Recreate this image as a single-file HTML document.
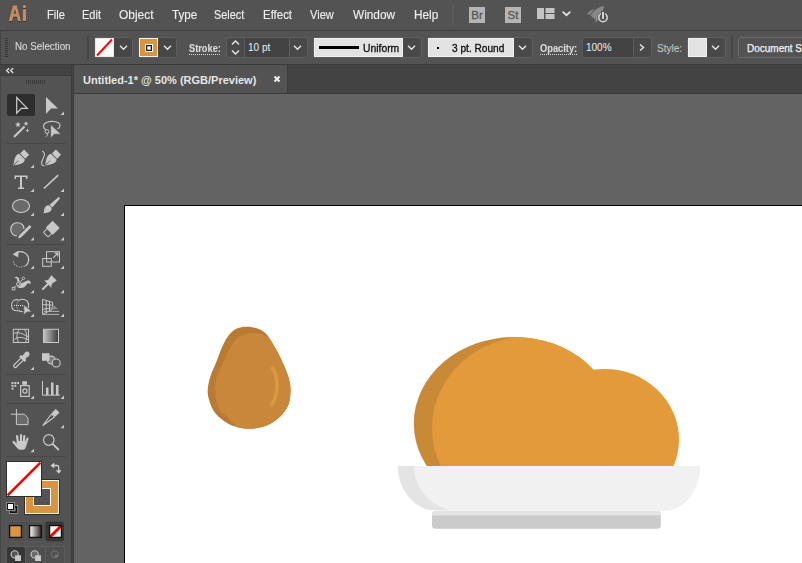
<!DOCTYPE html>
<html><head><meta charset="utf-8">
<style>
*{margin:0;padding:0;box-sizing:border-box}
html,body{width:802px;height:563px;overflow:hidden;background:#535353;font-family:"Liberation Sans",sans-serif}
.a{position:absolute}
#menubar{left:0;top:0;width:802px;height:30px;background:#535353}
#menusep{left:0;top:30px;width:802px;height:1px;background:#3d3d3d}
#ctrl{left:0;top:31px;width:802px;height:33px;background:#535353;border-left:1px solid #434343}
#ctrlsep{left:0;top:64px;width:802px;height:1px;background:#3a3a3a}
.mi{position:absolute;top:7px;font-size:13px;color:#ededed;-webkit-text-stroke:0.15px #ededed;white-space:nowrap;line-height:16px;transform-origin:0 0;transform:scaleX(0.87)}
.ct{position:absolute;font-size:10px;color:#d8d8d8;-webkit-text-stroke:0.12px #d8d8d8;white-space:nowrap;line-height:12px;transform-origin:0 0}
.dl{position:absolute;height:1px;background:repeating-linear-gradient(90deg,#d8d8d8 0 1px,transparent 1px 2px)}
#tabbar{left:74px;top:65px;width:728px;height:28px;background:#434343}
#tab{left:74px;top:65px;width:214px;height:28px;background:#535353;border-right:1px solid #3c3c3c}
#tabline{left:74px;top:93px;width:728px;height:1px;background:#3a3a3a}
#paste{left:74px;top:94px;width:728px;height:469px;background:#636363}
#artboard{left:124px;top:205px;width:700px;height:400px;background:#fff;border-left:1px solid #000;border-top:1px solid #000}
#panel{left:0;top:65px;width:71px;height:498px;background:#535353;border-left:1px solid #474747}
#panelhead{left:0;top:65px;width:71px;height:11px;background:#434343;border-bottom:1px solid #3a3a3a}
#ps1{left:71px;top:65px;width:1px;height:498px;background:#3b3b3b}
#ps2{left:72px;top:65px;width:1px;height:498px;background:#454545}
#ps3{left:73px;top:65px;width:1px;height:498px;background:#3b3b3b}
.box{position:absolute;top:37px;height:21px;border:1px solid #5e5e5e;border-radius:3px;background:#494949;overflow:hidden}
.lt{position:absolute;top:0;height:19px;background:#e4e4e4}
.dk{position:absolute;top:0;height:19px;background:#434343}
.vt{position:absolute;top:0;width:1px;height:19px;background:#5e5e5e}
.bt{position:absolute;font-size:10px;white-space:nowrap;line-height:12px;transform-origin:0 0}
</style></head><body>
<div class="a" id="menubar"></div>
<div class="a" id="menusep"></div>
<div class="a" id="ctrl"></div>
<div class="a" id="ctrlsep"></div>
<div class="a" id="tabbar"></div>
<div class="a" id="tab"></div>
<div class="a" id="tabline"></div>
<div class="a" id="paste"></div>
<div class="a" id="artboard"></div>
<div class="a" id="panel"></div>
<div class="a" id="panelhead"></div>
<div class="a" id="ps1"></div><div class="a" id="ps2"></div><div class="a" id="ps3"></div>

<!-- menu -->
<svg class="a" style="left:0;top:0" width="40" height="30" viewBox="0 0 40 30">
  <defs><filter id="sh" x="-20%" y="-20%" width="140%" height="140%"><feGaussianBlur stdDeviation="0.6"/></filter></defs>
  <g fill="#2f2f2f" filter="url(#sh)" transform="translate(0,0.8)">
    <path d="M8.8,21 L12.9,5.4 H16.8 L20.9,21 H17.9 L17,16.8 H13.2 L12.2,21 Z M14.8,9.3 L13.5,13.8 H16.3 Z" fill-rule="evenodd"/>
    <rect x="22.8" y="9.3" width="3.2" height="11.7"/><circle cx="24.4" cy="6.6" r="1.7"/>
  </g>
  <g fill="#c98a5e">
    <path d="M8.8,21 L12.9,5.4 H16.8 L20.9,21 H17.9 L17,16.8 H13.2 L12.2,21 Z M14.8,9.3 L13.5,13.8 H16.3 Z" fill-rule="evenodd"/>
    <rect x="22.8" y="9.3" width="3.2" height="11.7"/><circle cx="24.4" cy="6.6" r="1.7"/>
  </g>
</svg>
<div class="mi" style="left:47px;transform:scaleX(0.857)">File</div>
<div class="mi" style="left:82px;transform:scaleX(0.85)">Edit</div>
<div class="mi" style="left:119px;transform:scaleX(0.92)">Object</div>
<div class="mi" style="left:172px;transform:scaleX(0.89)">Type</div>
<div class="mi" style="left:214px;transform:scaleX(0.84)">Select</div>
<div class="mi" style="left:263px;transform:scaleX(0.88)">Effect</div>
<div class="mi" style="left:310px;transform:scaleX(0.85)">View</div>
<div class="mi" style="left:353px;transform:scaleX(0.91)">Window</div>
<div class="mi" style="left:414px;transform:scaleX(0.91)">Help</div>
<div class="a" style="left:452px;top:5px;width:2px;height:20px;background:#5b5b5b;border-radius:1px"></div>
<div class="a" style="left:469px;top:7px;width:16px;height:16px;background:#b5b5b5;color:#555555;font-size:11.5px;line-height:17px;text-align:center;-webkit-text-stroke:0.3px #555555">Br</div>
<div class="a" style="left:505px;top:7px;width:16px;height:16px;background:#b5b5b5;color:#555555;font-size:11.5px;line-height:17px;text-align:center;-webkit-text-stroke:0.3px #555555">St</div>
<svg class="a" style="left:530px;top:0" width="90" height="30" viewBox="530 0 90 30">
  <rect x="537" y="8" width="7" height="11" fill="#c4c4c4"/>
  <rect x="545.5" y="8" width="9" height="5" fill="#c4c4c4"/>
  <rect x="545.5" y="14" width="9" height="5" fill="#c4c4c4"/>
  <path d="M562.6,11.6 L566.5,15.2 L570.4,11.6" fill="none" stroke="#e0e0e0" stroke-width="1.8"/>
  <path d="M604,6 C599,6.5 594,10 590.5,15.5 L594.5,19 C600,15.5 603.5,11 604,6 Z" fill="#868686"/>
  <path d="M587,14.6 C588.5,11.5 591,9.5 594.8,9 C593,10.5 591.5,12.5 590.3,14.6 Z" fill="#868686"/>
  <path d="M596,16 L599,18 C598,20 597,21.5 595.5,22.8 C595.2,20.5 595.3,18 596,16 Z" fill="#868686"/>
  <circle cx="603" cy="17.5" r="5.4" fill="#535353"/>
  <circle cx="603" cy="17.5" r="4.2" fill="none" stroke="#d2d2d2" stroke-width="1.6"/>
  <rect x="601" y="11" width="4" height="8.5" fill="#535353"/>
  <rect x="602" y="12" width="2" height="6.8" fill="#d2d2d2"/>
</svg>

<!-- control bar -->
<svg class="a" style="left:0;top:31px" width="90" height="33" viewBox="0 31 90 33">
  <g fill="#373737">
    <rect x="5" y="38" width="3" height="1"/><rect x="5" y="40" width="3" height="1"/><rect x="5" y="42" width="3" height="1"/><rect x="5" y="44" width="3" height="1"/><rect x="5" y="46" width="3" height="1"/><rect x="5" y="48" width="3" height="1"/><rect x="5" y="50" width="3" height="1"/><rect x="5" y="52" width="3" height="1"/><rect x="5" y="54" width="3" height="1"/><rect x="5" y="56" width="3" height="1"/>
  </g>
  <rect x="87" y="35" width="2" height="24.5" fill="#474747"/>
</svg>
<div class="ct" style="left:15px;top:41px;transform:scaleX(0.98)">No Selection</div>

<!-- stroke swatch + dropdown -->
<div class="box" style="left:94px;width:39px"><div class="dk" style="left:19px;width:19px;background:#474747"></div></div>
<svg class="a" style="left:95px;top:38px" width="19" height="19" viewBox="0 0 19 19">
  <rect x="0" y="0" width="19" height="19" fill="#fff" stroke="#d0d0d0" stroke-width="1"/>
  <path d="M2,17.5 L17,1.5" stroke="#f00" stroke-width="2"/>
</svg>
<div class="box" style="left:138px;width:39px"><div class="dk" style="left:19px;width:19px;background:#474747"></div></div>
<svg class="a" style="left:139px;top:38px" width="19" height="19" viewBox="0 0 19 19">
  <rect x="0.5" y="0.5" width="18" height="18" fill="#d99440" stroke="#f2f2f2" stroke-width="1"/>
  <rect x="6" y="6" width="8" height="8" fill="#fff"/>
  <rect x="7" y="7" width="6" height="6" fill="#1a1a1a"/>
  <rect x="8.3" y="8.3" width="3.4" height="3.4" fill="#fff"/>
</svg>

<div class="dl" style="left:189px;top:54px;width:31px"></div><div class="ct" style="left:189px;top:43px;font-weight:bold;transform:scaleX(0.925)">Stroke:</div>
<!-- spinner -->
<div class="box" style="left:226px;width:82px"><div class="vt" style="left:17px"></div><div class="dk" style="left:18px;width:44px"></div><div class="vt" style="left:62px"></div></div>
<div class="bt" style="left:248px;top:42px;color:#f0f0f0">10 pt</div>
<!-- uniform -->
<div class="box" style="left:313px;width:109px"></div><div class="a" style="left:314px;top:38px;width:89px;height:19px;background:#e3e3e3;border:1px solid #f0f0f0"></div>
<div class="a" style="left:319px;top:46px;width:40px;height:3px;background:#000"></div>
<div class="bt" style="left:363px;top:42px;color:#141414;font-size:11px;transform:scaleX(0.94);-webkit-text-stroke:0.35px #141414">Uniform</div>
<!-- 3pt round -->
<div class="box" style="left:427px;width:106px"></div><div class="a" style="left:428px;top:38px;width:86px;height:19px;background:#e3e3e3;border:1px solid #f0f0f0"></div>
<div class="a" style="left:436.5px;top:46.5px;width:2px;height:2px;background:#000"></div>
<div class="bt" style="left:452px;top:42px;color:#141414;font-size:11px;transform:scaleX(0.92);-webkit-text-stroke:0.35px #141414">3 pt. Round</div>
<div class="dl" style="left:540px;top:54px;width:37px"></div><div class="ct" style="left:540px;top:43px;font-weight:bold;transform:scaleX(0.93)">Opacity:</div>
<!-- opacity -->
<div class="box" style="left:582px;width:70px"><div class="dk" style="left:0;width:50px"></div><div class="vt" style="left:50px"></div></div>
<div class="bt" style="left:586px;top:42px;color:#f0f0f0">100%</div>
<div class="ct" style="left:657px;top:43px;color:#bdbdbd">Style:</div>
<div class="box" style="left:687px;width:39px"></div><div class="a" style="left:688px;top:38px;width:19px;height:19px;background:#e3e3e3;border:1px solid #f0f0f0"></div>
<div class="a" style="left:731px;top:35px;width:2px;height:24px;background:#474747"></div>
<div class="a" style="left:738px;top:37px;width:80px;height:21px;border:1px solid #6a6a6a;border-radius:3px;background:#535353"></div>
<div class="ct" style="left:747px;top:43px;color:#f2f2f2;-webkit-text-stroke:0.25px #f2f2f2">Document Setup</div>

<svg class="a" style="left:0;top:31px" width="802" height="33" viewBox="0 31 802 33">
  <g fill="none" stroke="#e8e8e8" stroke-width="1.4">
    <path d="M120,45.8 L123.5,49.2 L127,45.8"/>
    <path d="M164,45.8 L167.5,49.2 L171,45.8"/>
    <path d="M232,44.5 L235.5,41 L239,44.5"/>
    <path d="M232,50.5 L235.5,54 L239,50.5"/>
    <path d="M294,45.8 L297.5,49.2 L301,45.8"/>
    <path d="M408,45.8 L411.5,49.2 L415,45.8"/>
    <path d="M519,45.8 L522.5,49.2 L526,45.8"/>
    <path d="M640,44.5 L643.5,47.5 L640,50.5"/>
    <path d="M712,45.8 L715.5,49.2 L719,45.8"/>
  </g>
</svg>
<!-- tab -->
<div class="a" style="left:83px;top:74px;font-size:11px;font-weight:bold;color:#e6e6e6;white-space:nowrap;line-height:13px">Untitled-1* @ 50% (RGB/Preview)</div>
<svg class="a" style="left:270px;top:72px" width="14" height="14" viewBox="270 72 14 14">
  <path d="M274.5,76.5 L279.5,81.5 M279.5,76.5 L274.5,81.5" stroke="#f2f2f2" stroke-width="2"/>
</svg>

<!-- toolbar icons -->
<svg class="a" style="left:0;top:65px" width="71" height="498" viewBox="0 65 71 498">
  <path d="M9.2,68.3 L6.6,70.6 L9.2,72.9 M13.2,68.3 L10.6,70.6 L13.2,72.9" fill="none" stroke="#e6e6e6" stroke-width="1.3"/>
  <g fill="#3a3a3a"><rect x="26" y="80" width="1" height="4"/><rect x="28" y="80" width="1" height="4"/><rect x="30" y="80" width="1" height="4"/><rect x="32" y="80" width="1" height="4"/><rect x="34" y="80" width="1" height="4"/><rect x="36" y="80" width="1" height="4"/><rect x="38" y="80" width="1" height="4"/><rect x="40" y="80" width="1" height="4"/><rect x="42" y="80" width="1" height="4"/><rect x="44" y="80" width="1" height="4"/></g>
  <rect x="7" y="94" width="28" height="22" rx="2" fill="#2e2e2e"/>
  <g fill="#484848">
    <rect x="6" y="143" width="60" height="1"/><rect x="6" y="244" width="60" height="1"/><rect x="6" y="321" width="60" height="1"/><rect x="6" y="374" width="60" height="1"/><rect x="6" y="403" width="60" height="1"/><rect x="6" y="456" width="60" height="1"/>
  </g>
  <g fill="#c8c8c8">
    <!-- corner triangles -->
    <path d="M64,111.5 V115 H60.5 Z"/>
    <path d="M34,164.5 V168 H30.5 Z"/>
    <path d="M34,188.5 V192 H30.5 Z"/><path d="M64,188.5 V192 H60.5 Z"/>
    <path d="M34,212.5 V216 H30.5 Z"/><path d="M64,212.5 V216 H60.5 Z"/>
    <path d="M34,237 V240.5 H30.5 Z"/><path d="M64,237 V240.5 H60.5 Z"/>
    <path d="M34,265.5 V269 H30.5 Z"/><path d="M64,265.5 V269 H60.5 Z"/>
    <path d="M34,289.7 V293.2 H30.5 Z"/><path d="M64,289.7 V293.2 H60.5 Z"/>
    <path d="M34,313.6 V317.1 H30.5 Z"/><path d="M64,313.6 V317.1 H60.5 Z"/>
    <path d="M34,366.5 V370 H30.5 Z"/>
    <path d="M34,395.5 V399 H30.5 Z"/><path d="M64,395.5 V399 H60.5 Z"/>
    <path d="M64,424.7 V428.2 H60.5 Z"/>
    <path d="M34,448.7 V452.2 H30.5 Z"/>
  </g>
  <!-- selection -->
  <path d="M16.7,97.5 V113.2 L21.3,108.3 H27.3 Z" fill="none" stroke="#cfcfcf" stroke-width="1.2"/>
  <path d="M46,97 V114 L51,108.5 H58 Z" fill="#c8c8c8"/>
  <!-- magic wand -->
  <path d="M14,137 L24.5,126.5" stroke="#c8c8c8" stroke-width="2.2"/>
  <path d="M18,121.5 L18.8,123.6 L21,123.8 L19.2,125.1 L19.8,127.3 L18,126 L16.2,127.3 L16.8,125.1 L15,123.8 L17.2,123.6 Z" fill="#c8c8c8"/>
  <path d="M26,121 L26.7,122.7 L28.5,123 L27,124 L27.5,125.8 L26,124.7 L24.5,125.8 L25,124 L23.5,123 L25.3,122.7 Z" fill="#c8c8c8"/>
  <path d="M27.5,128.5 L28.1,130 L29.5,130.3 L28.2,131 L27.5,132.5 L26.8,131 L25.5,130.3 L26.9,130 Z" fill="#c8c8c8"/>
  <!-- lasso -->
  <path d="M46,130 C43.2,128.5 42.6,125.5 44.8,123.5 C47.5,121 54.5,120.6 58.3,122.8 C60.8,124.3 60.6,127.4 57.5,129" fill="none" stroke="#c8c8c8" stroke-width="1.1"/>
  <circle cx="47" cy="131.6" r="1.9" fill="none" stroke="#c8c8c8" stroke-width="1"/>
  <path d="M47.6,133.4 C47.8,135 47,136.3 45.6,136.8" fill="none" stroke="#c8c8c8" stroke-width="1"/>
  <path d="M50.6,124.4 V138.2 L54.4,134.2 H61.2 Z" fill="#c8c8c8" stroke="#535353" stroke-width="0.8"/>
  <!-- pen -->
  <g transform="translate(13.2,165.6) rotate(45)">
    <path d="M0,0 C-1.6,-3 -4.6,-6 -4.9,-9 C-5.1,-11 -4.3,-12.2 -3.6,-12.6 H3.6 C4.3,-12.2 5.1,-11 4.9,-9 C4.6,-6 1.6,-3 0,0 Z" fill="#c8c8c8"/>
    <rect x="-3.6" y="-19" width="7.2" height="5.6" fill="#c8c8c8"/>
    <path d="M0,-0.8 V-7" stroke="#535353" stroke-width="0.9"/>
  </g>
  <!-- curvature pen -->
  <g transform="translate(45,165.6) rotate(45)">
    <path d="M0,0 C-1.6,-3 -4.6,-6 -4.9,-9 C-5.1,-11 -4.3,-12.2 -3.6,-12.6 H3.6 C4.3,-12.2 5.1,-11 4.9,-9 C4.6,-6 1.6,-3 0,0 Z" fill="#c8c8c8"/>
    <rect x="-3.6" y="-19" width="7.2" height="5.6" fill="#c8c8c8"/>
    <path d="M0,-0.8 V-7" stroke="#535353" stroke-width="0.9"/>
  </g>
  <path d="M42,151.2 C44,151.8 45.2,153.5 44,156.5 C42.8,159.3 41.2,161.5 41.6,163.8 C41.9,165.3 43,165.9 44.3,165.7" fill="none" stroke="#c8c8c8" stroke-width="1.1"/>
  <!-- type -->
  <path d="M14.5,175.5 H27.5 V179 H26 V177 H22 V187.5 H24 V189 H18 V187.5 H20 V177 H16 V179 H14.5 Z" fill="#c8c8c8"/>
  <!-- line -->
  <path d="M43.9,188.5 L58.2,175.2" stroke="#c8c8c8" stroke-width="1.7"/>
  <!-- ellipse -->
  <ellipse cx="21" cy="206" rx="8.5" ry="6.5" fill="#6a6a6a" stroke="#cfcfcf" stroke-width="1.1"/>
  <!-- brush -->
  <g transform="translate(43.4,213.6) rotate(45)">
    <path d="M0,0 C-0.8,-2 -3.4,-4 -3.4,-6.6 A3.4,3.4 0 0 1 3.4,-6.6 C3.4,-4 0.8,-2 0,0 Z" fill="#c8c8c8"/>
    <path d="M-1.9,-10.6 L-1.1,-21.8 A1.1,1.1 0 0 1 1.1,-21.8 L1.9,-10.6 Z" fill="#c8c8c8"/>
  </g>
  <!-- shaper -->
  <path d="M24,229 C24,225 21,222.8 17,222.8 C13,222.8 10.8,226 10.8,229.5 C10.8,233 13.5,236 17,236" fill="#6a6a6a" stroke="#cfcfcf" stroke-width="1.1"/>
  <path d="M29.5,225 L31.5,227 L21,237.5 L18,238.5 L19,235.5 Z" fill="#c8c8c8"/>
  <!-- eraser -->
  <g transform="translate(50.9,229.6) rotate(-45)">
    <rect x="-2.2" y="-5" width="9.6" height="10" fill="#c8c8c8"/>
    <rect x="-7.2" y="-3.3" width="5.4" height="6.6" rx="0.6" fill="none" stroke="#c8c8c8" stroke-width="1"/>
  </g>
  <!-- rotate -->
  <path d="M17.5,252.4 C19,251.6 21,251.5 23,252 C27,253.2 29,257 28.6,260.5 C28.3,263 27,265 25.5,266" fill="none" stroke="#c8c8c8" stroke-width="1.3"/>
  <path d="M12.6,254.2 L18.3,250.8 V257.4 Z" fill="#c8c8c8"/>
  <path d="M13.3,261.5 L14.6,264.2 L16.8,266 L19.6,267 L22.4,266.9 L25,266" fill="none" stroke="#c8c8c8" stroke-width="1.1" stroke-dasharray="1.1,1.5"/>
  <!-- scale -->
  <rect x="46.5" y="251.7" width="13" height="10.3" fill="none" stroke="#c8c8c8" stroke-width="1"/>
  <rect x="42.7" y="258.5" width="8.6" height="7.8" fill="none" stroke="#c8c8c8" stroke-width="1"/>
  <path d="M53.2,257.8 L57.6,253.4 M54.6,253.1 H57.9 V256.4" fill="none" stroke="#c8c8c8" stroke-width="1.1"/>
  <!-- puppet warp -->
  <path d="M14.2,277.8 C15.5,276.2 17.5,276.4 18.6,278 C19.6,279.5 19.4,281.5 20.5,282.6 C21.8,283.6 23.5,282.8 25.2,281.6 C26.8,280.5 28.5,280.2 29.8,281 C31,282 30.8,283.5 30.2,284.6 C29.6,283.4 28.6,283 27.6,283.6 C26.5,284.5 25.8,286.2 24.2,287.2 C22.5,288.2 20,288.3 18,287.5 C16.5,286.6 16.2,285 16.8,283.2 C17.4,281.5 17.5,279.8 16.8,278.8 C16.2,278 15.2,277.7 14.2,277.8 Z" fill="#c8c8c8"/>
  <path d="M14.3,287.5 L16.8,285.3 M19.6,282.8 L22.4,279.6" stroke="#c8c8c8" stroke-width="0.9"/>
  <circle cx="18.2" cy="284" r="2.4" fill="#535353"/>
  <circle cx="18.2" cy="284" r="1.6" fill="none" stroke="#c8c8c8" stroke-width="1"/>
  <rect x="12.3" y="287.3" width="2.6" height="2.6" fill="#535353" stroke="#c8c8c8" stroke-width="0.9"/>
  <circle cx="23.3" cy="278.4" r="1.3" fill="#535353" stroke="#c8c8c8" stroke-width="0.9"/>
  <!-- pin -->
  <g transform="translate(42.3,289.6) rotate(45)">
    <path d="M0,-0.9 V-7.8" stroke="#c8c8c8" stroke-width="2" stroke-linecap="round"/>
    <path d="M-5.4,-7.7 C-4,-8.6 -3,-9.8 -2.7,-11.5 L-3.85,-16.6 H3.85 L2.7,-11.5 C3,-9.8 4,-8.6 5.4,-7.7 Z" fill="#c8c8c8"/>
  </g>
  <!-- shape builder -->
  <path d="M16.5,299.6 C13.5,299.6 11.6,302.2 11.6,305.3 C11.6,308.6 13.8,310.8 17,310.8 C17.5,310.8 18,310.7 18.5,310.5 C19.8,311.4 21.2,311.7 22.6,311.6 M16.5,299.6 C17.4,299.6 18.2,299.8 19,300.2 C20,299.6 21.2,299.3 22.5,299.3 C26,299.3 28.6,301.8 28.6,305.2 C28.6,306.3 28.4,307.3 27.9,308.2" fill="none" stroke="#c8c8c8" stroke-width="1.1"/>
  <path d="M19,300.2 C17.6,301.2 16.8,303.2 16.8,305.3 C16.8,307.4 17.5,309.3 18.5,310.5" fill="none" stroke="#8a8a8a" stroke-width="1"/>
  <g fill="#e0e0e0"><rect x="14" y="305" width="1" height="1"/><rect x="16" y="305" width="1" height="1"/><rect x="18" y="305" width="1" height="1"/><rect x="20" y="305" width="1" height="1"/><rect x="22" y="305" width="1" height="1"/></g>
  <path d="M23.8,304.6 V315.2 L26.6,312.2 L32,311.8 Z" fill="#c8c8c8" stroke="#535353" stroke-width="0.8"/>
  <!-- perspective grid -->
  <path d="M42.6,299.4 L52.6,302.4 V309.2 L42.6,314.4 Z M46.2,300.5 V312.6 M49.5,301.5 V310.9 M42.6,304.6 L52.6,305.2 M42.6,309.4 L52.6,307.6" fill="none" stroke="#c8c8c8" stroke-width="1"/>
  <path d="M50,309.2 H58 L54.5,305.8 H52.5 Z" fill="#8c8c8c"/>
  <path d="M44,311.4 H59.2 M42.6,314.4 H59.2" fill="none" stroke="#b4b4b4" stroke-width="1"/>
  <!-- mesh -->
  <rect x="13.3" y="329.3" width="15.2" height="13.2" fill="none" stroke="#c8c8c8" stroke-width="1"/>
  <path d="M19.3,329.3 C16.2,333 16.4,338.5 18.6,342.5 M24.4,329.3 C27.2,333 27.6,337.5 25.3,342.5 M13.3,333.8 C16.5,331.8 21,332.2 28.5,337.2 M13.3,340.5 C16,337 21.5,336 28.5,340" fill="none" stroke="#c8c8c8" stroke-width="1"/>
  <!-- gradient -->
  <defs>
    <linearGradient id="tg" x1="0" x2="1" y1="0" y2="0"><stop offset="0" stop-color="#c4c4c4"/><stop offset="1" stop-color="#3c3c3c"/></linearGradient>
    <linearGradient id="gw" x1="0" x2="1" y1="0" y2="0"><stop offset="0" stop-color="#ffffff"/><stop offset="1" stop-color="#2a2020"/></linearGradient>
  </defs>
  <rect x="43.5" y="329.3" width="15" height="13.2" fill="url(#tg)" stroke="#c8c8c8" stroke-width="1"/>
  <!-- eyedropper -->
  <g transform="translate(14.2,367) rotate(45)">
    <path d="M-1.6,-11 V-1.6 A1.6,1.6 0 0 0 1.6,-1.6 V-11" fill="none" stroke="#c8c8c8" stroke-width="1.2"/>
    <rect x="-3.8" y="-13.4" width="7.6" height="2.6" rx="0.5" fill="#c8c8c8"/>
    <rect x="-2.2" y="-16.5" width="4.4" height="3.4" fill="#c8c8c8"/>
    <path d="M-2.5,-16.4 V-18.2 A2.5,2.5 0 0 1 2.5,-18.2 V-16.4 Z" fill="#c8c8c8"/>
  </g>
  <!-- blend -->
  <circle cx="51.3" cy="360" r="3.9" fill="#7c7c7c" stroke="#c8c8c8" stroke-width="1.1"/>
  <rect x="42" y="353.2" width="7.5" height="7.6" fill="#c8c8c8"/>
  <circle cx="56.2" cy="363" r="4" fill="#535353" stroke="#c8c8c8" stroke-width="1.1"/>
  <!-- symbol sprayer -->
  <g fill="#c8c8c8"><rect x="11.5" y="382" width="2" height="2"/><rect x="14.3" y="382" width="2" height="2"/><rect x="17.1" y="382" width="2" height="2"/><rect x="11.5" y="384.8" width="2" height="2"/><rect x="14.3" y="384.8" width="2" height="2"/><rect x="11.5" y="387.6" width="2" height="2"/>
  <rect x="22.3" y="381.2" width="4.6" height="3.6"/></g>
  <rect x="20.6" y="385.6" width="8.6" height="10.8" fill="none" stroke="#c8c8c8" stroke-width="1.2"/>
  <circle cx="24.9" cy="391" r="2.1" fill="none" stroke="#c8c8c8" stroke-width="1.2"/>
  <!-- column graph -->
  <path d="M42.5,381 V395.2 H60" fill="none" stroke="#c8c8c8" stroke-width="1"/>
  <g fill="#c8c8c8"><rect x="46" y="387.5" width="2.5" height="7.5"/><rect x="51" y="382.5" width="2.5" height="12.5"/><rect x="56" y="385" width="2.5" height="10"/></g>
  <!-- artboard -->
  <path d="M16.4,409 V416 M10.7,414.2 H17.5" stroke="#c8c8c8" stroke-width="1"/>
  <path d="M16.4,414.2 H24.3 L28,417.9 V424.6 H16.4 Z" fill="#6a6a6a" stroke="#c8c8c8" stroke-width="1"/>
  <!-- slice -->
  <g transform="translate(42.6,425.8) rotate(45)">
    <rect x="-2.6" y="-21.2" width="5.2" height="6" rx="0.4" fill="#c8c8c8"/>
    <path d="M0,-0.5 L-2.1,-14.6 H2.1 Z" fill="none" stroke="#c8c8c8" stroke-width="1.1" stroke-linejoin="round"/>
  </g>
  <!-- hand -->
  <path d="M18,442.5 L17,436 M21,442 V435 M23.9,442 L24.3,436 M25.9,443.5 L27.5,438.6" stroke="#c8c8c8" stroke-width="2.2" stroke-linecap="round"/>
  <path d="M17.2,446.2 L13.6,441.9" stroke="#c8c8c8" stroke-width="2.3" stroke-linecap="round"/>
  <path d="M16.8,441 H26.8 C27,444.5 26.2,447.8 24.6,449.3 C23.6,450 19.6,450 18.6,449.3 C17.6,448.6 16.6,447.3 16,446 Z" fill="#c8c8c8"/>
  <!-- zoom -->
  <circle cx="48.8" cy="440" r="5.3" fill="none" stroke="#c8c8c8" stroke-width="1.2"/>
  <path d="M52.6,443.8 L58.3,449.5" stroke="#c8c8c8" stroke-width="1.8" stroke-linecap="round"/>
  <!-- fill/stroke -->
  <rect x="24" y="479" width="36" height="36" fill="#2e2e2e"/>
  <rect x="25" y="480" width="34" height="34" fill="#f4f4f4"/>
  <rect x="26" y="481" width="32" height="32" fill="#d99440"/>
  <rect x="33" y="488" width="18" height="18" fill="#f4f4f4"/>
  <rect x="34" y="489" width="16" height="16" fill="#535353"/>
  <rect x="6" y="461" width="36" height="36" fill="#2e2e2e"/>
  <rect x="7" y="462" width="34" height="34" fill="#ffffff"/>
  <path d="M7.6,495.4 L40.4,462.6" stroke="#ff0000" stroke-width="2.6"/>
  <path d="M53,465.5 H57 C58.1,465.5 58.7,466.1 58.7,467.2 V471" fill="none" stroke="#d0d0d0" stroke-width="1.3"/>
  <path d="M50.6,465.5 L54.2,462.6 V468.4 Z M55.8,470.3 H61.6 L58.7,473.7 Z" fill="#d0d0d0"/>
  <rect x="9" y="505" width="9.2" height="9" fill="#8a8a8a"/>
  <rect x="10" y="506" width="7.2" height="7" fill="#111"/>
  <rect x="12" y="508" width="3.2" height="3" fill="none" stroke="#a0a0a0" stroke-width="0.7"/>
  <rect x="6" y="502" width="9" height="9" fill="#8a8a8a"/>
  <rect x="7" y="503" width="7" height="7" fill="#111"/>
  <rect x="8" y="504" width="5" height="5" fill="#fff"/>
  <!-- color mode buttons -->
  <rect x="6.5" y="521.5" width="57" height="20" rx="2" fill="#4e4e4e" stroke="#595959" stroke-width="1"/>
  <rect x="25" y="522" width="1" height="19" fill="#595959"/>
  <rect x="45.5" y="521.5" width="18.5" height="20" rx="2" fill="#363636"/>
  <rect x="9.6" y="525.6" width="11.8" height="11.8" fill="#dc9540" stroke="#111" stroke-width="1.3"/>
  <rect x="29.6" y="525.6" width="11.8" height="11.8" fill="url(#gw)" stroke="#111" stroke-width="1.3"/>
  <rect x="49.6" y="525.6" width="11.8" height="11.8" fill="#fff"/>
  <path d="M50,537 L61,526" stroke="#f00" stroke-width="3"/>
  <rect x="49.6" y="525.6" width="11.8" height="11.8" fill="none" stroke="#111" stroke-width="1.3"/>
  <!-- drawing modes -->
  <rect x="6.5" y="546.5" width="58" height="20" rx="2" fill="#4f4f4f" stroke="#5c5c5c" stroke-width="1"/>
  <rect x="25" y="547" width="1" height="16" fill="#5c5c5c"/><rect x="45" y="547" width="1" height="16" fill="#5c5c5c"/>
  <rect x="7" y="547" width="18" height="17" rx="1.5" fill="#363636"/>
  <circle cx="14.7" cy="554.4" r="3.6" fill="#555" stroke="#c8c8c8" stroke-width="1.1"/>
  <rect x="15.1" y="555.3" width="5.9" height="5.7" fill="#c8c8c8"/>
  <circle cx="34.7" cy="554.4" r="3.6" fill="#6a6a6a" stroke="#c8c8c8" stroke-width="1.1"/>
  <rect x="35.1" y="555.3" width="5.9" height="5.7" fill="#c8c8c8"/>
  <circle cx="54.8" cy="554.4" r="3.5" fill="none" stroke="#747474" stroke-width="1"/><path d="M54.8,554.4 H58.3 A3.5,3.5 0 0 1 54.8,557.9 Z" fill="#747474"/>
</svg>

<!-- artwork -->
<svg class="a" style="left:0;top:0" width="802" height="563" viewBox="0 0 802 563">
  <defs>
    <clipPath id="potclip"><path id="pot" d="M249.0,326.8 C253.1,327.1 258.2,328.6 261.5,330.3 C264.8,332.0 266.6,334.3 268.8,337.2 C271.0,340.1 273.0,344.3 274.9,347.6 C276.8,350.9 278.6,354.0 280.2,357.2 C281.8,360.4 283.1,363.2 284.5,366.8 C285.9,370.4 287.8,374.6 288.8,378.5 C289.8,382.4 290.6,385.7 290.5,390.0 C290.4,394.3 290.2,400.1 288.5,404.5 C286.8,408.9 283.9,412.9 280.3,416.4 C276.7,419.9 272.0,423.3 266.8,425.4 C261.6,427.4 254.7,428.7 248.9,428.7 C243.1,428.7 236.7,427.1 232.0,425.4 C227.3,423.7 224.0,421.2 220.8,418.6 C217.6,416.0 215.0,413.1 213.0,409.7 C211.0,406.3 209.5,401.5 208.6,398.0 C207.7,394.5 207.5,392.1 207.8,388.5 C208.1,384.9 209.1,380.5 210.4,376.4 C211.7,372.2 213.9,368.1 215.7,363.6 C217.5,359.2 219.0,354.1 221.0,349.7 C223.0,345.3 224.9,340.5 227.5,337.0 C230.1,333.5 233.2,330.3 236.8,328.6 C240.4,326.9 244.9,326.5 249.0,326.8 Z"/></clipPath>
    <clipPath id="topclip"><rect x="0" y="0" width="802" height="466"/></clipPath>
    <clipPath id="bigclip"><ellipse cx="514.5" cy="423.5" rx="100.7" ry="86.5"/></clipPath>
  </defs>
  <use href="#pot" fill="#b97b34"/>
  <g clip-path="url(#potclip)"><path d="M238.0,428.0 C236.1,426.1 229.5,419.6 226.4,416.6 C223.3,413.6 221.5,412.9 219.7,409.9 C217.9,406.9 216.6,402.2 215.8,398.4 C215.1,394.6 215.1,390.7 215.2,387.2 C215.3,383.7 215.8,380.4 216.6,377.5 C217.4,374.6 218.6,372.8 220.0,369.5 C221.4,366.2 223.2,361.8 225.3,357.5 C227.4,353.2 230.2,347.3 232.6,343.8 C234.9,340.3 236.7,338.3 239.4,336.6 C242.1,334.9 245.5,333.9 248.8,333.4 C252.1,332.9 256.1,333.1 259.0,333.6 C261.9,334.1 263.8,335.1 266.0,336.2 C268.2,337.3 271.0,339.8 272.0,340.5 L280,334 L300,340 L300,440 L238,440 Z" fill="#c8873a"/></g>
  <path d="M272.6,368.3 C277.8,375 279.2,394 271.8,404.8" fill="none" stroke="#da993f" stroke-width="3.8" stroke-linecap="round"/>
  <!-- bread -->
  <g clip-path="url(#topclip)">
  <ellipse cx="514.5" cy="423.5" rx="100.7" ry="86.5" fill="#c98a37"/>
  <ellipse cx="605" cy="439.6" rx="74" ry="70.6" fill="#e29a3a"/>
  <g clip-path="url(#bigclip)"><ellipse cx="531" cy="428" rx="99" ry="92" fill="#e29a3a"/></g>
  </g>
  <!-- plate -->
  <path d="M397.8,466 H700 A36,44.6 0 0 1 664,510.6 H436 A38.2,44.6 0 0 1 397.8,466 Z" fill="#e4e4e4"/>
  <path d="M414,466 H700 A36,44.6 0 0 1 664,510.6 H459 A45,44.6 0 0 1 414,466 Z" fill="#f1f1f1"/>
  <rect x="432" y="511.1" width="228.8" height="17.7" rx="3.5" fill="#cbcbcb"/>
  <path d="M435.5,511.1 H657.3 A3.5,3.5 0 0 1 660.8,514.6 V515.5 H432 V514.6 A3.5,3.5 0 0 1 435.5,511.1 Z" fill="#e4e4e4"/>
</svg>
</body></html>
